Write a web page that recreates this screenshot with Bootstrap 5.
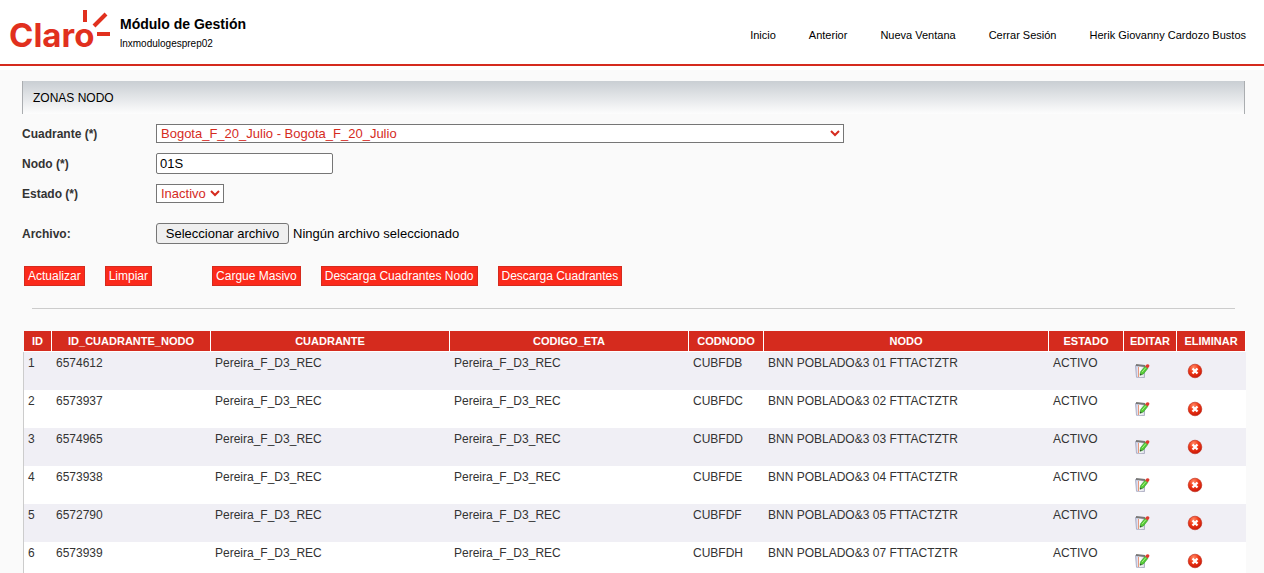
<!DOCTYPE html>
<html lang="es">
<head>
<meta charset="utf-8">
<meta name="viewport" content="width=device-width, initial-scale=1">
<title>Módulo de Gestión</title>
<link href="https://cdn.jsdelivr.net/npm/bootstrap@5.3.0/dist/css/bootstrap.min.css" rel="stylesheet">
<style>
  body { font-family: "Liberation Sans", Arial, sans-serif; font-size: 12px; line-height: 16px; color: #333; background: #fafafa; }
  .topbar { height: 66px; border-bottom: 2px solid #d52b1e; padding: 0 18px 0 8px; box-shadow: 0 4px 0 #fff; }
  .logo { width: 104px; height: 60px; overflow: visible; }
  .logo text { font-family: Inter, sans-serif; font-weight: 700; font-size: 33px; fill: #e1301e; }
  .logo line { stroke: #e1301e; stroke-width: 4; }
  .brand-text { padding: 14px 0 0 8px; }
  .app-name { font-size: 14px; line-height: 20px; color: #000; }
  .app-host { font-size: 10px; line-height: 20px; color: #000; }
  .menu { gap: 33px; font-size: 11px; line-height: 14px; padding-top: 6px; }
  .menu a { color: #000; text-decoration: none; }
  .page { padding: 15px 19px 0 22px; }
  .panel-title { height: 33px; padding: 0 10px; font-size: 12px; color: #000; border: solid #aaadb0; border-width: 0 1px; background: linear-gradient(#c9ced3, #fdfdfd); }
  .form-line { min-height: 30px; }
  .form-line > label { width: 134px; font-weight: 700; padding-top: 2px; }
  .form-line select, .form-line input, .form-line button { font-size: 13px; line-height: 15px; border: 1px solid #767676; }
  .form-line select { height: 19px; color: #d52b1e; background: #fff; border-radius: 0; }
  .sel-wide { width: 688px; max-width: 100%; }
  .sel-short { width: 68px; }
  .form-line input[type=text] { width: 177px; height: 21px; padding: 0 3px; color: #000; background: #fff; border-radius: 2px; }
  .form-line button { width: 133px; height: 21px; padding: 0; color: #000; background: #efefef; border-radius: 3px; }
  .file-state { font-size: 13px; color: #000; margin-left: 4px; padding-top: 1px; }
  .file-line { margin-top: 10px; }
  .actions { gap: 20px; padding: 18px 2px 22px; }
  .btn-claro { --bs-btn-color: #fff; --bs-btn-bg: #fb2a1b; --bs-btn-border-color: #d52b1e; --bs-btn-hover-color: #fff; --bs-btn-hover-bg: #d52b1e; --bs-btn-font-size: 12px; --bs-btn-line-height: 16px; --bs-btn-padding-x: 3px; --bs-btn-padding-y: 1px; --bs-btn-border-radius: 0; }
  .rule { height: 1px; background: #ccc; margin: 0 10px; }
  .grid { table-layout: fixed; width: 100%; margin: 22px 0 0 1px; border-collapse: separate; border-spacing: 0; background: #fff; }
  .grid th { height: 21px; padding: 0; font-size: 11px; line-height: 20px; text-align: center; color: #fff; background: #d52b1e; border-right: 1px solid #fff; border-bottom: 1px solid #fff; }
  .grid th:first-child { border-left: 1px solid #fafafa; }
  .grid td { height: 38px; padding: 3px 4px 0; vertical-align: top; }
  .grid td:first-child { border-left: 1px solid #ccc; }
  .grid tbody tr:nth-child(odd) { background: #f0eff5; }
  .grid td button { display: block; margin: 8px 0 0 6px; padding: 0; border: 0; background: none; }
  .grid svg { display: block; width: 16px; height: 16px; }
</style>
</head>
<body>
<svg class="position-absolute" width="0" height="0" aria-hidden="true">
  <defs>
    <linearGradient id="page-fill" x1="0" y1="0" x2="1" y2="0"><stop offset="0" stop-color="#c3c8e6"/><stop offset=".5" stop-color="#fff"/><stop offset="1" stop-color="#d9d9e6"/></linearGradient>
    <radialGradient id="ball-fill" cx=".4" cy=".25" r=".8"><stop offset="0" stop-color="#ff8a68"/><stop offset=".45" stop-color="#f03a17"/><stop offset="1" stop-color="#c81406"/></radialGradient>
  </defs>
  <symbol id="i-edit" viewBox="0 0 16 16">
    <path d="M1.500 2.500 10.500 3v11.500l-8-.2z" fill="url(#page-fill)" stroke="#a3a5bb" stroke-width=".8"/>
    <path d="M2 2 11 3" stroke="#777" stroke-width="1.800"/>
    <path d="M4.500 4v10" stroke="#e8987c"/>
    <path d="m6 12.300.6-3.600L11 3.300l2.800 2.200L9.400 11z" fill="#55c936" stroke="#2f9a28" stroke-width=".6"/>
    <path d="m8 9.200 4-4.700" stroke="#a8f184"/>
    <path d="m11 3.300 1.600-1.700q1.600-.9 2.600.3.600 1-.3 2L13.700 5.600z" fill="#df3b2f"/>
    <path d="m6 12.300.4-1.800 1.400 1.200z" fill="#333"/>
  </symbol>
  <symbol id="i-delete" viewBox="0 0 16 16">
    <circle cx="8" cy="8" r="6.800" fill="url(#ball-fill)" stroke="#b92312" stroke-width=".6"/>
    <path d="m5.500 5.500 5 5m0-5-5 5" stroke="#fff" stroke-width="2.300"/>
  </symbol>
</svg>

<header class="topbar d-flex justify-content-between bg-white">
  <div class="d-flex">
    <svg class="logo flex-shrink-0" viewBox="0 0 104 60" role="img" aria-label="Claro">
      <text x="1" y="47">Claro</text>
      <line x1="77" y1="10" x2="77" y2="22"/>
      <line x1="86" y1="26" x2="98" y2="14"/>
      <line x1="89" y1="34" x2="102" y2="34"/>
    </svg>
    <div class="brand-text">
      <div class="app-name fw-bold">Módulo de Gestión</div>
      <div class="app-host">lnxmodulogesprep02</div>
    </div>
  </div>
  <nav class="menu d-flex align-items-center">
    <a href="#">Inicio</a>
    <a href="#">Anterior</a>
    <a href="#">Nueva Ventana</a>
    <a href="#">Cerrar Sesión</a>
    <a href="#">Herik Giovanny Cardozo Bustos</a>
  </nav>
</header>

<main class="page">
  <div class="panel-title d-flex align-items-center mb-1">ZONAS NODO</div>
  <form>
    <div class="form-line d-flex align-items-center">
      <label class="flex-shrink-0" for="cuadrante">Cuadrante (*)</label>
      <select id="cuadrante" class="sel-wide"><option>Bogota_F_20_Julio - Bogota_F_20_Julio</option></select>
    </div>
    <div class="form-line d-flex align-items-center">
      <label class="flex-shrink-0" for="nodo">Nodo (*)</label>
      <input id="nodo" type="text" value="01S">
    </div>
    <div class="form-line d-flex align-items-center">
      <label class="flex-shrink-0" for="estado">Estado (*)</label>
      <select id="estado" class="sel-short"><option>Inactivo</option><option>Activo</option></select>
    </div>
    <div class="form-line file-line d-flex align-items-center">
      <label class="flex-shrink-0" for="archivo">Archivo:</label>
      <input id="archivo" type="file" hidden>
      <button type="button" onclick="document.getElementById('archivo').click()">Seleccionar archivo</button>
      <span class="file-state">Ningún archivo seleccionado</span>
    </div>
    <div class="actions d-flex flex-wrap">
      <button type="button" class="btn btn-claro">Actualizar</button>
      <button type="button" class="btn btn-claro me-4">Limpiar</button>
      <button type="button" class="btn btn-claro ms-3">Cargue Masivo</button>
      <button type="button" class="btn btn-claro">Descarga Cuadrantes Nodo</button>
      <button type="button" class="btn btn-claro">Descarga Cuadrantes</button>
    </div>
  </form>
  <div class="rule"></div>

  <table class="grid">
    <colgroup><col style="width:29px"><col style="width:159px"><col><col><col style="width:75px"><col style="width:285px"><col style="width:75px"><col style="width:53px"><col style="width:69px"></colgroup>
    <thead>
      <tr><th>ID</th><th>ID_CUADRANTE_NODO</th><th>CUADRANTE</th><th>CODIGO_ETA</th><th>CODNODO</th><th>NODO</th><th>ESTADO</th><th>EDITAR</th><th>ELIMINAR</th></tr>
    </thead>
    <tbody>
      <tr><td>1</td><td>6574612</td><td>Pereira_F_D3_REC</td><td>Pereira_F_D3_REC</td><td>CUBFDB</td><td>BNN POBLADO&amp;3 01 FTTACTZTR</td><td>ACTIVO</td><td><button type="button" aria-label="Editar"><svg><use href="#i-edit"/></svg></button></td><td><button type="button" aria-label="Eliminar"><svg><use href="#i-delete"/></svg></button></td></tr>
      <tr><td>2</td><td>6573937</td><td>Pereira_F_D3_REC</td><td>Pereira_F_D3_REC</td><td>CUBFDC</td><td>BNN POBLADO&amp;3 02 FTTACTZTR</td><td>ACTIVO</td><td><button type="button" aria-label="Editar"><svg><use href="#i-edit"/></svg></button></td><td><button type="button" aria-label="Eliminar"><svg><use href="#i-delete"/></svg></button></td></tr>
      <tr><td>3</td><td>6574965</td><td>Pereira_F_D3_REC</td><td>Pereira_F_D3_REC</td><td>CUBFDD</td><td>BNN POBLADO&amp;3 03 FTTACTZTR</td><td>ACTIVO</td><td><button type="button" aria-label="Editar"><svg><use href="#i-edit"/></svg></button></td><td><button type="button" aria-label="Eliminar"><svg><use href="#i-delete"/></svg></button></td></tr>
      <tr><td>4</td><td>6573938</td><td>Pereira_F_D3_REC</td><td>Pereira_F_D3_REC</td><td>CUBFDE</td><td>BNN POBLADO&amp;3 04 FTTACTZTR</td><td>ACTIVO</td><td><button type="button" aria-label="Editar"><svg><use href="#i-edit"/></svg></button></td><td><button type="button" aria-label="Eliminar"><svg><use href="#i-delete"/></svg></button></td></tr>
      <tr><td>5</td><td>6572790</td><td>Pereira_F_D3_REC</td><td>Pereira_F_D3_REC</td><td>CUBFDF</td><td>BNN POBLADO&amp;3 05 FTTACTZTR</td><td>ACTIVO</td><td><button type="button" aria-label="Editar"><svg><use href="#i-edit"/></svg></button></td><td><button type="button" aria-label="Eliminar"><svg><use href="#i-delete"/></svg></button></td></tr>
      <tr><td>6</td><td>6573939</td><td>Pereira_F_D3_REC</td><td>Pereira_F_D3_REC</td><td>CUBFDH</td><td>BNN POBLADO&amp;3 07 FTTACTZTR</td><td>ACTIVO</td><td><button type="button" aria-label="Editar"><svg><use href="#i-edit"/></svg></button></td><td><button type="button" aria-label="Eliminar"><svg><use href="#i-delete"/></svg></button></td></tr>
    </tbody>
  </table>
</main>
<script src="https://cdn.jsdelivr.net/npm/bootstrap@5.3.0/dist/js/bootstrap.bundle.min.js"></script>
</body>
</html>
